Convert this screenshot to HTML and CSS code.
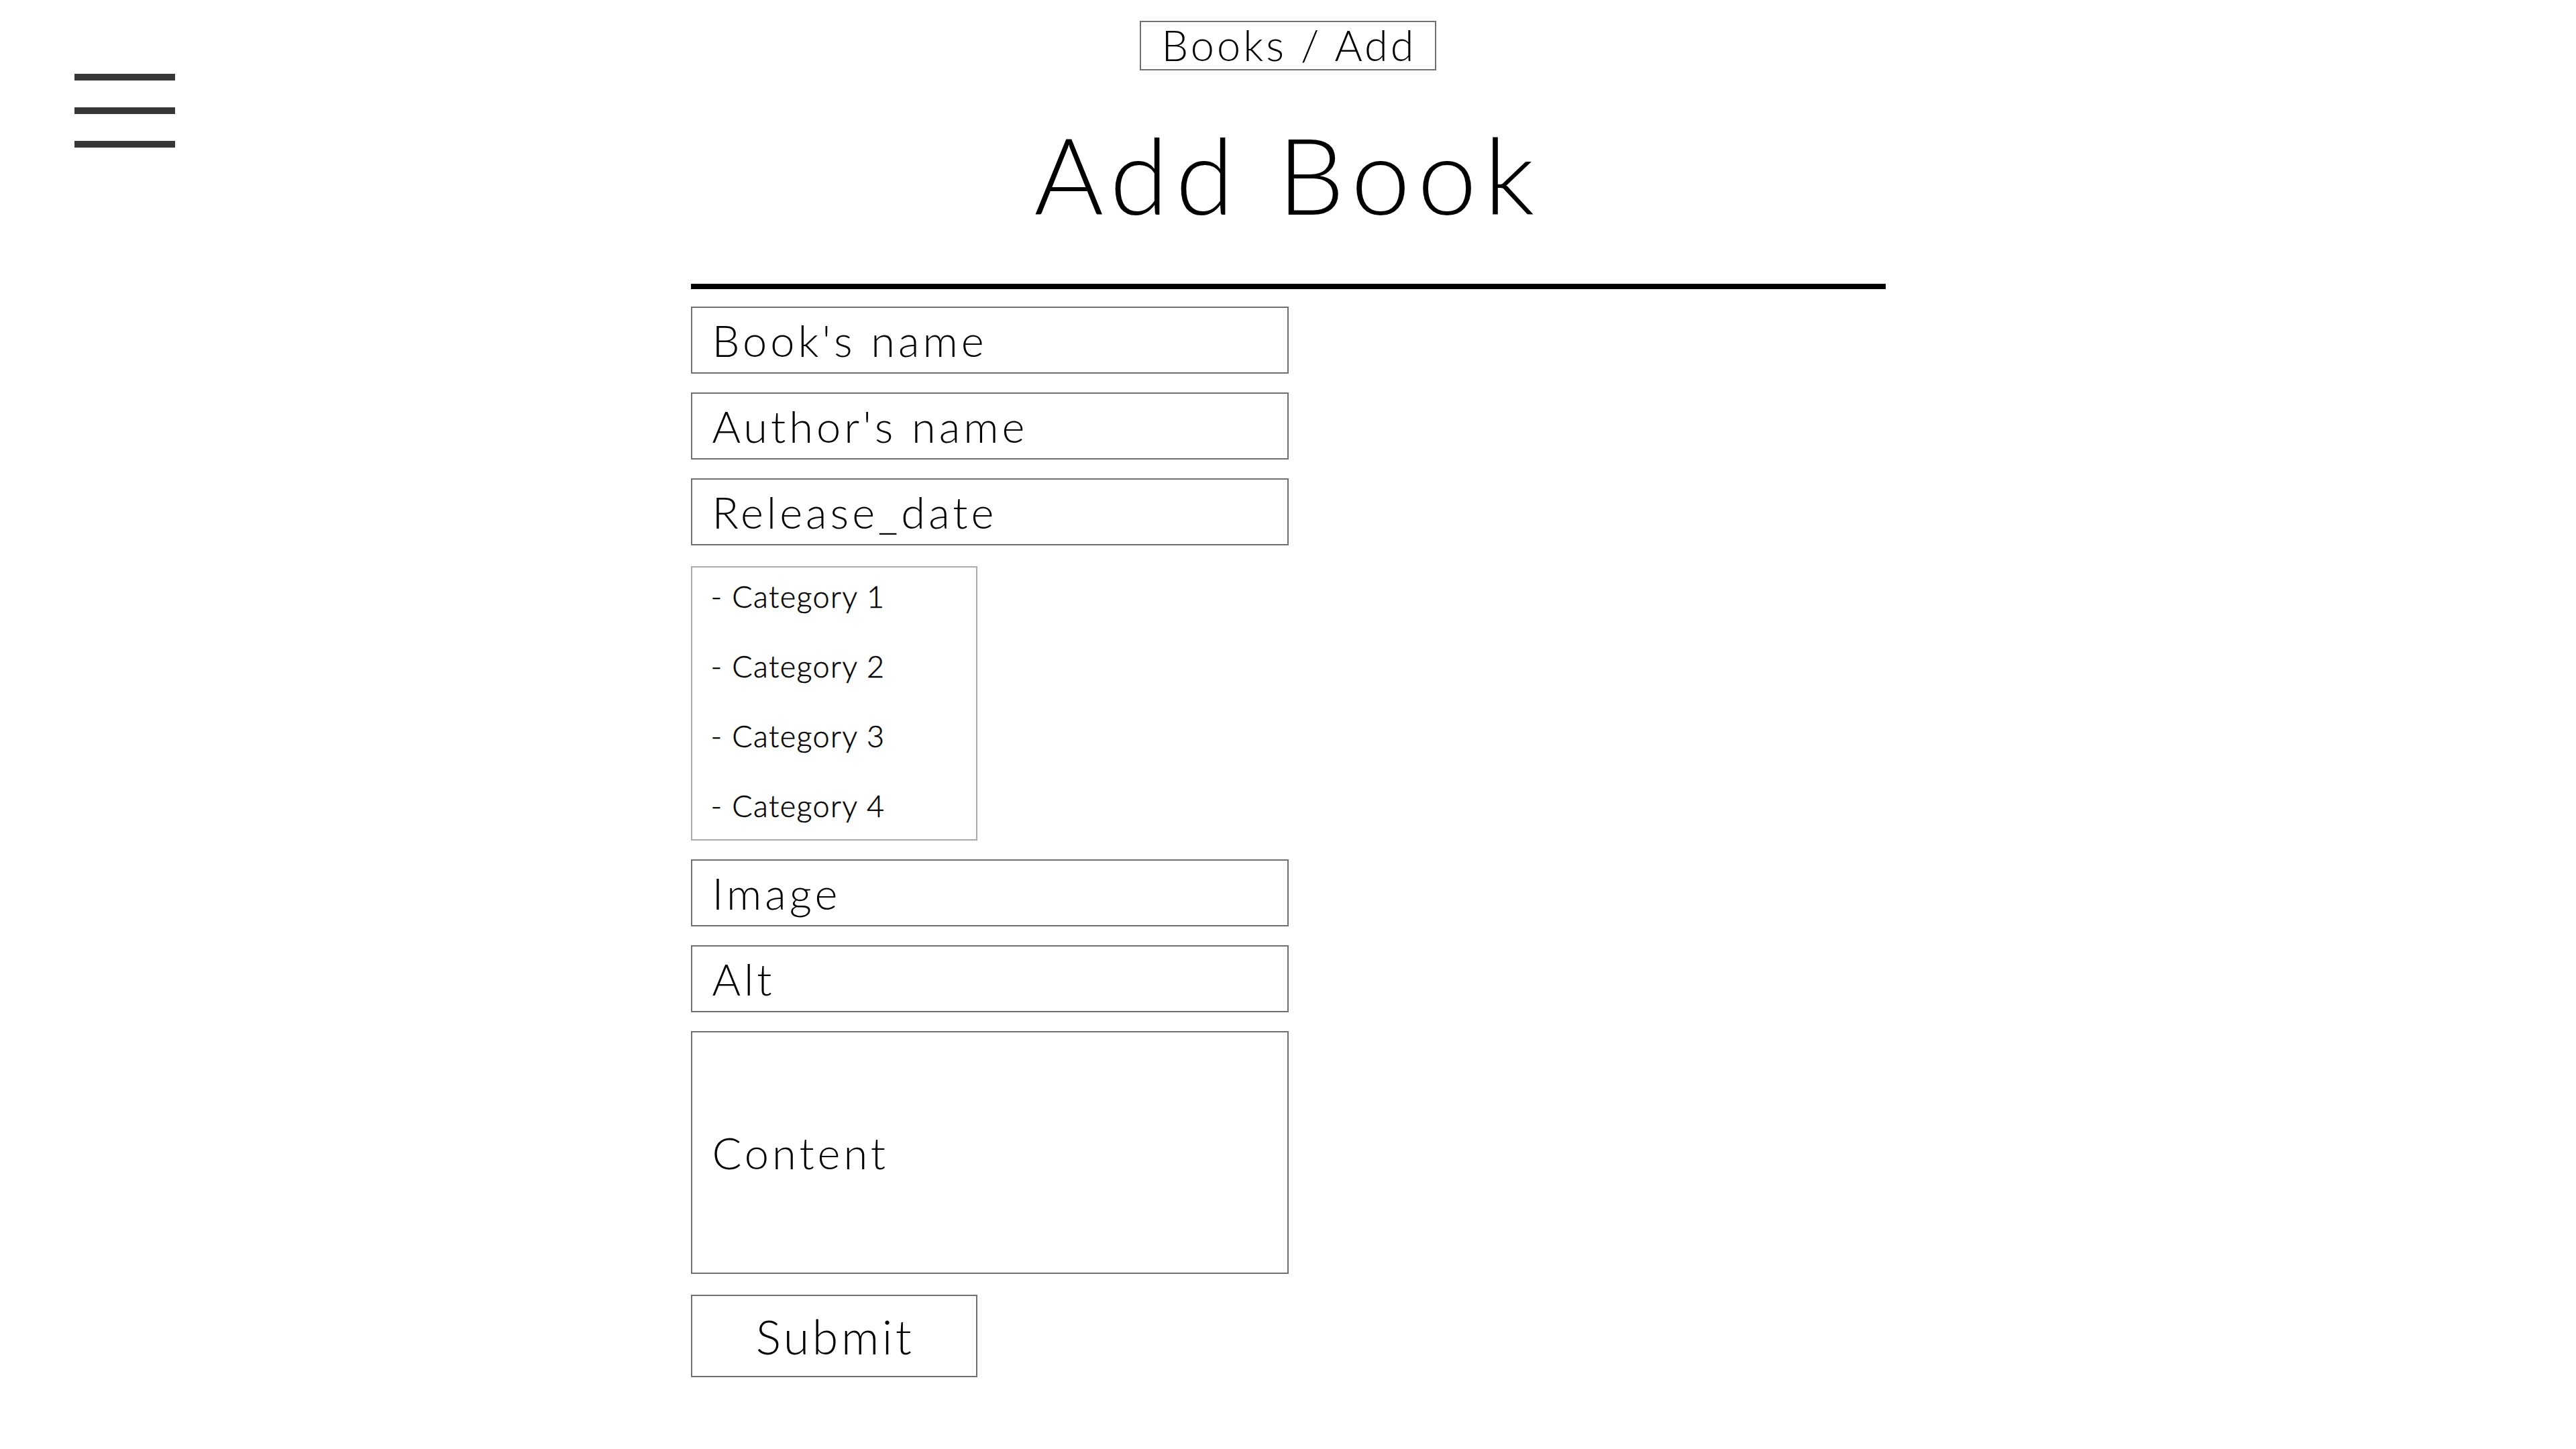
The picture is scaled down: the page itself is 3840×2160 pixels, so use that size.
FILE: index.html
```html
<!DOCTYPE html>
<html lang="en">
<head>
<meta charset="utf-8">
<title>Add Book</title>
<link rel="stylesheet" href="styles.css">
</head>
<body>
<button class="menu" aria-label="Menu">
  <span class="bar"></span>
  <span class="bar"></span>
  <span class="bar"></span>
</button>
<main class="page">
  <nav class="crumbs">Books / Add</nav>
  <h1 class="title">Add Book</h1>
  <hr class="rule">
  <form class="form">
    <input class="field" type="text" placeholder="Book's name">
    <input class="field" type="text" placeholder="Author's name">
    <input class="field" type="text" placeholder="Release_date">
    <div class="cats">
      <div class="cat">- Category 1</div>
      <div class="cat">- Category 2</div>
      <div class="cat">- Category 3</div>
      <div class="cat">- Category 4</div>
    </div>
    <input class="field" type="text" placeholder="Image">
    <input class="field" type="text" placeholder="Alt">
    <input class="field field-content" type="text" placeholder="Content">
    <button class="submit" type="button">Submit</button>
  </form>
</main>
</body>
</html>
```

FILE: styles.css
```css
html, body {
  margin: 0;
  padding: 0;
  background: #ffffff;
}
body {
  font-family: "Lato", "Open Sans", sans-serif;
  font-weight: 300;
  color: #000;
}
.menu {
  position: fixed;
  left: 111px;
  top: 110px;
  width: 150px;
  height: 110px;
  padding: 0;
  margin: 0;
  border: none;
  background: transparent;
  display: flex;
  flex-direction: column;
  justify-content: space-between;
}
.bar {
  display: block;
  width: 150px;
  height: 10px;
  background: #363636;
}
.page {
  width: 1781px;
  margin: 0 auto;
  padding-top: 31px;
  display: flex;
  flex-direction: column;
  align-items: center;
}
.crumbs {
  box-sizing: border-box;
  height: 74px;
  padding: 0 28px 0 31px;
  border: 2px solid #707070;
  font-size: 63px;
  line-height: 68px;
  letter-spacing: 4px;
}
.title {
  margin: 75px 0 0 0;
  font-size: 158px;
  line-height: 158px;
  font-weight: 300;
  letter-spacing: 11px;
}
.rule {
  align-self: stretch;
  height: 8px;
  margin: 85px 0 0 0;
  border: none;
  background: #000;
}
.form {
  align-self: stretch;
  margin-top: 26px;
  display: flex;
  flex-direction: column;
  align-items: flex-start;
  gap: 28px;
}
.field {
  box-sizing: border-box;
  width: 891px;
  height: 100px;
  margin: 0;
  padding: 0 0 0 30px;
  border: 2px solid #707070;
  border-radius: 0;
  background: #fff;
  font-family: inherit;
  font-weight: 300;
  font-size: 65px;
  letter-spacing: 5px;
  color: #000;
  outline: none;
}
.field::placeholder {
  color: #000;
  opacity: 1;
}
.field-content {
  height: 362px;
}
.cats {
  box-sizing: border-box;
  width: 427px;
  height: 409px;
  margin-top: 3px;
  padding: 0 0 0 28px;
  border: 2px solid #aaaaaa;
}
.cat {
  font-size: 45px;
  line-height: 86px;
  letter-spacing: 1.4px;
  margin-bottom: 18px;
  -webkit-text-stroke: 0.5px #000;
}
.submit {
  box-sizing: border-box;
  width: 427px;
  height: 123px;
  margin-top: 3px;
  padding: 0 0 0 4px;
  border: 2px solid #707070;
  border-radius: 0;
  background: #fff;
  font-family: inherit;
  font-weight: 300;
  font-size: 70px;
  letter-spacing: 4.5px;
  color: #000;
}
```
